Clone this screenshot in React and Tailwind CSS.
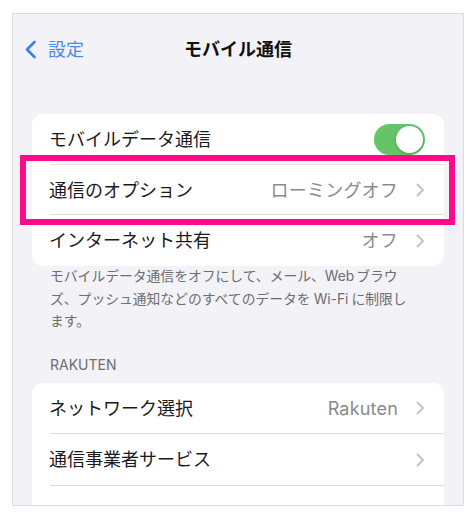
import React from "react";

const font = { fontFamily: 'Inter, "Noto Sans CJK JP", sans-serif' };

function Chevron() {
  return (
    <svg width="9" height="14" viewBox="0 0 9 14" className="ml-[18px] shrink-0">
      <path d="M1.5 1.5 L7 7 L1.5 12.5" fill="none" stroke="#c4c4c7" strokeWidth="2" strokeLinecap="round" strokeLinejoin="round" />
    </svg>
  );
}

function Row({ label, value, chevron = true, toggle = false, sep = true, h = "h-[51px]" }) {
  return (
    <div className={`relative flex items-center ${h} pl-[17px] pr-[19px]`}>
      <span className="flex-1 text-[18px] text-[#1a1a1c]">{label}</span>
      {value && <span className="text-[18px] tracking-[0.2px] text-[#8a8a8e]">{value}</span>}
      {chevron && !toggle && <Chevron />}
      {toggle && (
        <div className="w-[51px] h-[31px] rounded-full bg-[#65c466] flex items-center justify-end pr-[2px]">
          <div className="w-[27px] h-[27px] rounded-full bg-white shadow-[0_1px_3px_rgba(0,0,0,0.2)]" />
        </div>
      )}
      {sep && <div className="absolute bottom-0 left-[18px] right-0 h-px bg-[#dedee2]" />}
    </div>
  );
}

export default function App() {
  return (
    <div className="w-[476px] h-[517px] bg-white" style={font}>
      <div className="absolute left-[12px] top-[13px] w-[452px] h-[493px] border border-[#dcdcdc] bg-[#f2f2f7] overflow-hidden">
        <div className="relative h-[70px] flex items-center">
          <div className="flex items-center pl-[11px]">
            <svg width="13" height="19" viewBox="0 0 13 19">
              <path d="M10.5 2 L3 9.5 L10.5 17" fill="none" stroke="#3a7ff6" strokeWidth="2.6" strokeLinecap="round" strokeLinejoin="round" />
            </svg>
            <span className="ml-[11px] text-[18px] text-[#4a89f3]">設定</span>
          </div>
          <div className="absolute inset-0 flex items-center justify-center">
            <span className="text-[18px] font-bold text-[#111]">モバイル通信</span>
          </div>
        </div>

        <div className="mt-[30px] mx-[19px] bg-white rounded-[11px] overflow-hidden">
          <Row label="モバイルデータ通信" toggle />
          <Row label="通信のオプション" value="ローミングオフ" h="h-[50px]" />
          <Row label="インターネット共有" value="オフ" sep={false} />
        </div>

        <div className="-mt-[1px] px-[37px] text-[13.8px] leading-[22.5px] text-[#6d6d72]">
          モバイルデータ通信をオフにして、メール、Web<span className="ml-[2px]">ブラウ</span><br />
          ズ、プッシュ通知などのすべてのデータを<span className="mx-[3px]">Wi-Fi</span>に制限し<br />
          ます。
        </div>

        <div className="mt-[22px] px-[37px] text-[14px] leading-[20px] text-[#6d6d72]">RAKUTEN</div>

        <div className="mt-[8px] mx-[19px] bg-white rounded-[11px] overflow-hidden">
          <Row label="ネットワーク選択" value="Rakuten" />
          <Row label="通信事業者サービス" h="h-[52px]" />
          <Row label="" chevron={false} sep={false} />
        </div>

        <div className="absolute left-[7px] top-[141px] w-[435px] h-[70px] border-[6.5px] border-[#fd0a8a]" />
      </div>
    </div>
  );
}
